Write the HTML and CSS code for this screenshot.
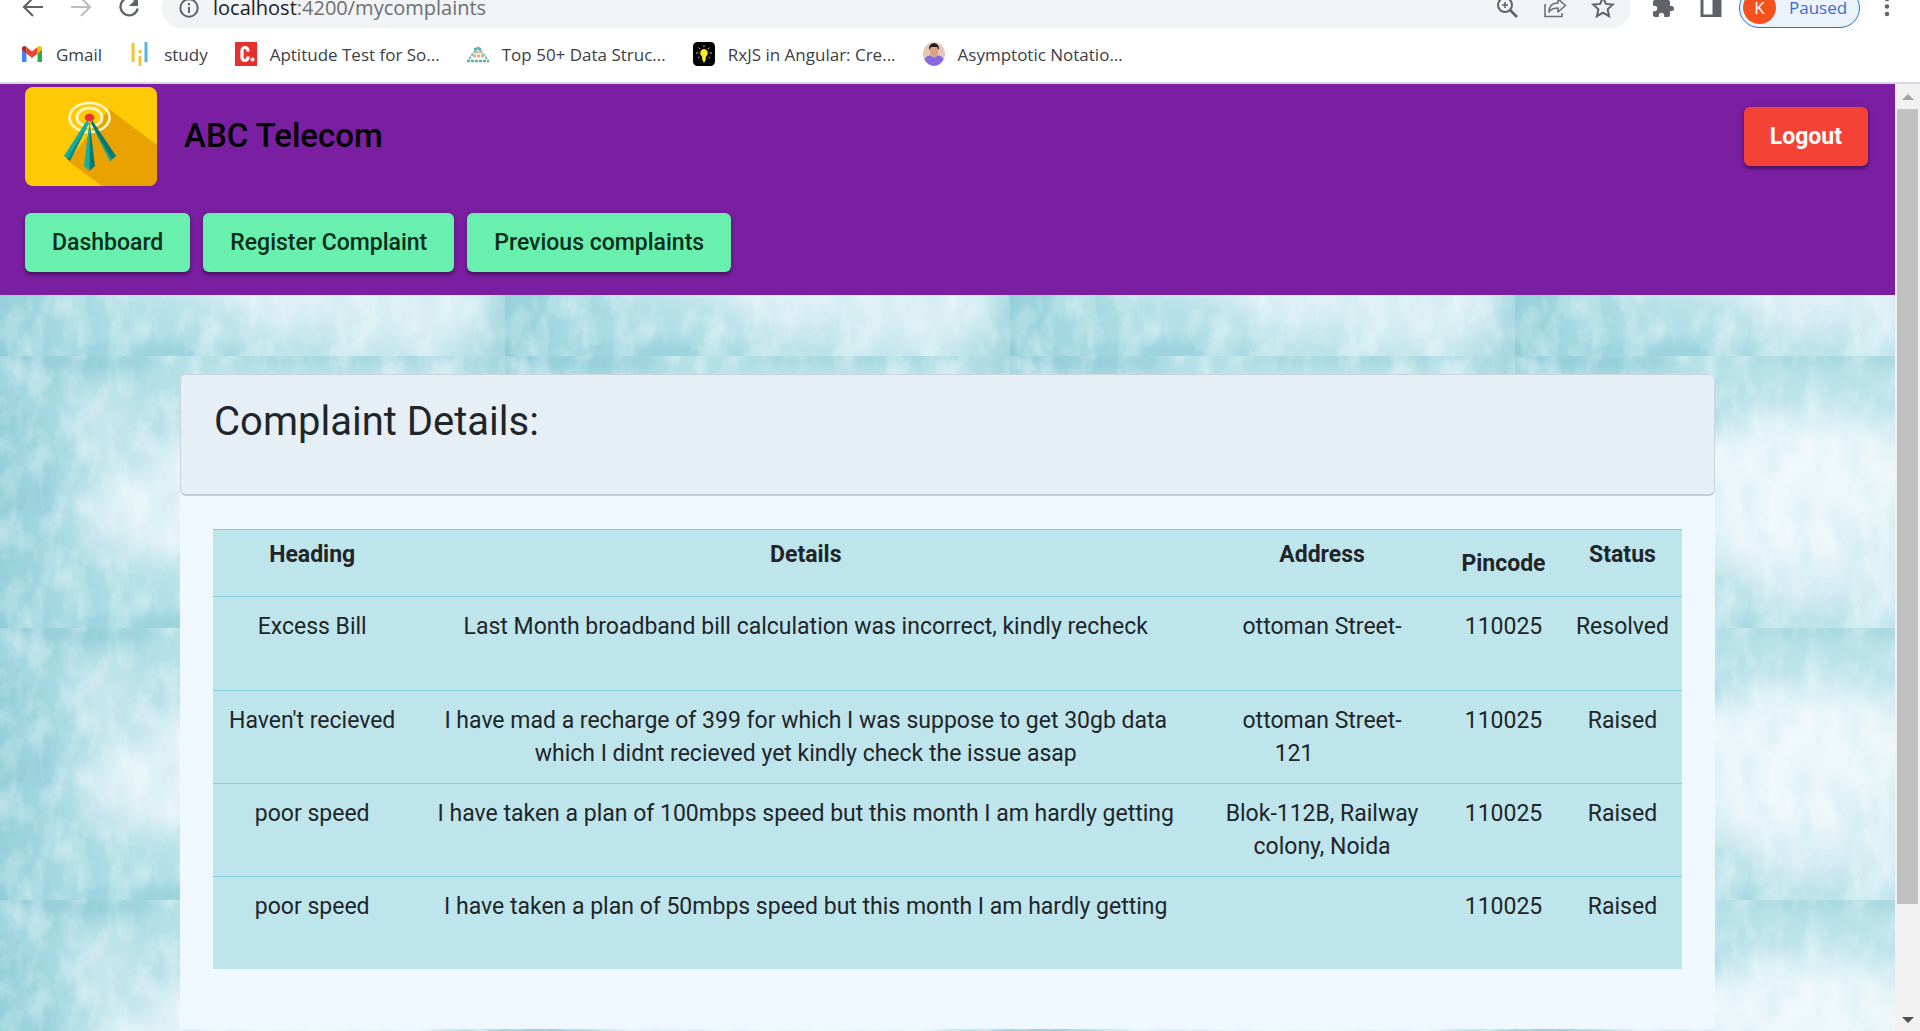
FILE: index.html
```html
<!DOCTYPE html>
<html lang="en">
<head>
<meta charset="utf-8">
<title>My complaints</title>
<link rel="stylesheet" href="styles.css">
</head>
<body>
<div class="browser">
  <header class="chrome">
    <div class="toolbar">
      <div class="nav">
        <button class="icon-btn" aria-label="Back"><svg width="24" height="24" viewBox="0 0 24 24"><path d="M22 12H3M12 3l-9 9 9 9" fill="none" stroke="#5f6368" stroke-width="2.2"/></svg></button>
        <button class="icon-btn" aria-label="Forward"><svg width="24" height="24" viewBox="0 0 24 24"><path d="M2 12h19M12 3l9 9-9 9" fill="none" stroke="#bdbfc2" stroke-width="2.2"/></svg></button>
        <button class="icon-btn" aria-label="Reload"><svg width="24" height="24" viewBox="0 0 24 24"><path d="M19 6.200A8.700 8.700 0 1 0 20.700 13.500" fill="none" stroke="#5f6368" stroke-width="2.300"/><path d="M21 2v9h-9z" fill="#5f6368"/></svg></button>
      </div>
      <div class="omnibox">
        <svg width="22" height="22" viewBox="0 0 22 22"><circle cx="11" cy="11" r="8.700" fill="none" stroke="#5f6368" stroke-width="2"/><path d="M11 10v6M11 6v2.200" stroke="#5f6368" stroke-width="2"/></svg>
        <p class="url">localhost<span class="url-path">:4200/mycomplaints</span></p>
        <div class="omni-actions">
          <button class="icon-btn" aria-label="Zoom"><svg width="24" height="24" viewBox="0 0 24 24"><circle cx="10" cy="10" r="7" fill="none" stroke="#5f6368" stroke-width="2"/><path d="M15 15l7 7" stroke="#5f6368" stroke-width="2.600"/><path d="M10 7v6M7 10h6" stroke="#5f6368" stroke-width="1.600"/></svg></button>
          <button class="icon-btn" aria-label="Share"><svg width="24" height="24" viewBox="0 0 24 24"><path d="M2 9v12.500h17V18" fill="none" stroke="#6c7074" stroke-width="1.600"/><path d="M6 17c0-6 3-9 9-9V4l7.500 6.500L15 17v-4c-4 0-7 1-9 4z" fill="none" stroke="#6c7074" stroke-width="1.600" stroke-linejoin="round"/></svg></button>
          <button class="icon-btn" aria-label="Bookmark"><svg width="24" height="24" viewBox="0 0 24 24"><path d="M12 2.500l2.900 6.400 6.800.7-5.100 4.700 1.500 6.900-6.100-3.600-6.100 3.600 1.500-6.900L2.300 9.600l6.800-.7z" fill="none" stroke="#5f6368" stroke-width="2"/></svg></button>
        </div>
      </div>
      <div class="tools">
        <button class="icon-btn" aria-label="Extensions"><svg width="24" height="24" viewBox="0 0 24 24"><path d="M20.500 11H19V7a2 2 0 0 0-2-2h-4V3.500a2.500 2.500 0 0 0-5 0V5H4a2 2 0 0 0-2 2v3.800h1.500a2.700 2.700 0 0 1 0 5.400H2V20c0 1.100.9 2 2 2h3.800v-1.500a2.700 2.700 0 0 1 5.400 0V22H17a2 2 0 0 0 2-2v-4h1.500a2.500 2.500 0 0 0 0-5z" fill="#5f6368"/></svg></button>
        <button class="icon-btn" aria-label="Side panel"><svg width="24" height="24" viewBox="0 0 24 24"><path d="M1.500 2h21v20h-21z" fill="#5f6368"/><path d="M4.500 5h9v14.500h-9z" fill="#fff"/></svg></button>
        <button class="profile"><span class="avatar">K</span>Paused</button>
        <button class="icon-btn narrow" aria-label="Menu"><svg width="6" height="24" viewBox="0 0 6 24"><g fill="#5f6368"><circle cx="3" cy="4" r="2.200"/><circle cx="3" cy="11.500" r="2.200"/><circle cx="3" cy="19" r="2.200"/></g></svg></button>
      </div>
    </div>
    <nav class="bookmarks">
      <a href="#"><svg width="24" height="24" viewBox="0 0 24 24"><path d="M2 6v14h4.500v-9z" fill="#4285f4"/><path d="M22 6v14h-4.500v-9z" fill="#34a853"/><path d="M6.500 5l5.500 4.500L17.500 5v6.500L12 16l-5.500-4.500z" fill="#ea4335"/><path d="M2 6.500C2 4 4.500 3.300 6.500 5v6.500L2 8z" fill="#c5221f"/><path d="M22 6.500C22 4 19.500 3.300 17.500 5v6.500L22 8z" fill="#fbbc04"/></svg>Gmail</a>
      <a href="#"><svg width="24" height="24" viewBox="0 0 24 24"><path d="M5 1v19M12 14v10M12 8v3" stroke="#fbc02d" stroke-width="3"/><path d="M18 0v20" stroke="#55b4e6" stroke-width="3"/></svg>study</a>
      <a href="#"><svg width="24" height="24" viewBox="0 0 24 24"><path d="M1 0h22v24H1z" fill="#e53030"/><path d="M14 9.500V8.500a3 3 0 0 0-6 0v7a3 3 0 0 0 6 0v-1" fill="none" stroke="#fff" stroke-width="3.200"/><circle cx="18.500" cy="17.500" r="2" fill="#fff"/></svg>Aptitude Test for So...</a>
      <a href="#"><svg width="24" height="24" viewBox="0 0 24 24"><path d="M12 5l-9 12M12 5l9 12" stroke="#74c3bd" stroke-width="2" stroke-dasharray="3 1"/><path d="M9 10h7M7 14h11" stroke="#e7b46c" stroke-width="3" stroke-dasharray="3 1"/><path d="M1 19h22M8 7h8" stroke="#54b2ad" stroke-width="2.500" stroke-dasharray="3 1"/></svg>Top 50+ Data Struc...</a>
      <a href="#"><svg width="24" height="24" viewBox="0 0 24 24"><rect x="1" width="22" height="24" rx="4.500"/><path d="M12 7a4 4 0 0 1 2.500 7c-.7.800-.7 1.500-.7 3.500L12 21l-1.800-3.500c0-2 0-2.700-.7-3.500A4 4 0 0 1 12 7z" fill="#f9ee21"/><path d="M12 3v2M6.500 5.500L8 7M17.500 5.500L16 7M4 11h2.500M17.500 11H20M6 16l1.500-1M18 16l-1.500-1" stroke="#d8c92a"/></svg>RxJS in Angular: Cre...</a>
      <a href="#"><svg width="24" height="24" viewBox="0 0 24 24"><ellipse cx="12" cy="12" rx="11" ry="12" fill="#e4c8b9"/><path d="M2.500 17c2-4 6-4 9.500-3 4-1 7.500-1 9.500 3-4 9-15 9-19 0z" fill="#8666e4"/><path d="M8 5h8v6c0 6-8 6-8 0z" fill="#d7a184"/><path d="M7 8c-1-9 11-9 10 0l-2-3H9z" fill="#231c22"/></svg>Asymptotic Notatio...</a>
    </nav>
  </header>
  <div class="viewport">
    <div class="page">
      <svg class="backdrop" width="100%" height="100%" aria-hidden="true">
        <defs>
          <filter id="soft" x="-50%" y="-50%" width="200%" height="200%"><feGaussianBlur stdDeviation="17"/></filter>
          <filter id="soft-small" x="-50%" y="-100%" width="200%" height="300%"><feGaussianBlur stdDeviation="8"/></filter>
          <filter id="grain" x="0" y="0" width="100%" height="100%">
            <feTurbulence type="fractalNoise" baseFrequency="0.045 0.025" numOctaves="4" seed="8"/>
            <feColorMatrix values="0 0 0 0 .95  0 0 0 0 .99  0 0 0 0 1  2.400 0 0 0 -.95"/>
          </filter>
          <filter id="shade" x="0" y="0" width="100%" height="100%">
            <feTurbulence type="fractalNoise" baseFrequency="0.040 0.020" numOctaves="4" seed="21"/>
            <feColorMatrix values="0 0 0 0 .48  0 0 0 0 .76  0 0 0 0 .82  2.400 0 0 0 -.95"/>
          </filter>
          <linearGradient id="base"><stop offset="0" stop-color="#8eccd6"/><stop offset=".12" stop-color="#a3d8e0"/><stop offset=".35" stop-color="#b4e0e6"/><stop offset=".9" stop-color="#bde3e9"/><stop offset="1" stop-color="#a2d5dd"/></linearGradient>
          <pattern id="tile" width="505" height="272" patternUnits="userSpaceOnUse">
            <rect width="505" height="272" fill="url(#base)"/>
            <g filter="url(#soft)">
              <ellipse cx="290" cy="140" rx="155" ry="82" fill="#edf7fc"/>
              <ellipse cx="290" cy="205" rx="55" ry="42" fill="#e6f3f9"/>
              <ellipse cx="410" cy="205" rx="80" ry="62" fill="#dbeff4"/>
              <ellipse cx="105" cy="65" rx="38" ry="26" fill="#cfe9ef"/>
              <ellipse cx="150" cy="155" rx="70" ry="48" fill="#e2f2f7"/>
              <ellipse cx="48" cy="138" rx="14" ry="26" fill="#8fc9da"/>
            </g>
            <g filter="url(#soft-small)">
              <ellipse cx="150" cy="268" rx="95" ry="10" fill="#94d0dc"/>
              <ellipse cx="90" cy="5" rx="70" ry="9" fill="#8fcbd7"/>
              <ellipse cx="360" cy="0" rx="150" ry="8" fill="#9fd3dc"/>
              <ellipse cx="180" cy="62" rx="36" ry="11" fill="#aedce3"/>
            </g>
            <rect width="505" height="272" filter="url(#grain)" opacity=".45"/>
            <rect width="505" height="272" filter="url(#shade)" opacity=".3"/>
          </pattern>
        </defs>
        <rect width="100%" height="100%" fill="url(#tile)"/>
      </svg>
      <header class="site-header">
        <div class="brand-row">
          <svg class="logo" width="132" height="99" viewBox="0 0 132 99" role="img" aria-label="ABC Telecom logo"><path d="M0 0h132v99H0z" fill="#ffca05"/><path d="M84 22l48 36v41H77L43 74z" fill="#e9a300"/><g fill="none" stroke="#fff5c4"><ellipse cx="64.500" cy="30.500" rx="20" ry="14.500" stroke-width="2.600"/><ellipse cx="64.500" cy="30.500" rx="12.500" ry="9.500" stroke-width="2.800"/></g><path d="M62 33L39 69l6 5 19-38z" fill="#16aea1"/><path d="M64 36L45 74l-3-2z" fill="#0e877d"/><path d="M67 33l24 36-6 5-19-38z" fill="#08776f"/><path d="M66 36l19 38 2-1z" fill="#17a69a"/><path d="M64.500 34L59 79l5.500 5z" fill="#16aea1"/><path d="M64.500 34L70 79l-5.500 5z" fill="#08776f"/><ellipse cx="64.500" cy="30.500" rx="4.800" ry="3.800" fill="#ee2f2f"/></svg>
          <h1 class="brand">ABC Telecom</h1>
          <button class="btn btn-logout">Logout</button>
        </div>
        <nav class="menu">
          <button class="btn">Dashboard</button>
          <button class="btn">Register Complaint</button>
          <button class="btn">Previous complaints</button>
        </nav>
      </header>
      <main class="content">
        <section class="card">
          <div class="card-header"><h2>Complaint Details:</h2></div>
          <div class="card-body">
            <table class="complaints">
              <colgroup><col class="c-heading"><col class="c-details"><col class="c-address"><col class="c-pin"><col class="c-status"></colgroup>
              <thead>
                <tr><th>Heading</th><th>Details</th><th>Address</th><th class="mid">Pincode</th><th>Status</th></tr>
              </thead>
              <tbody>
                <tr><td>Excess Bill</td><td>Last Month broadband bill calculation was incorrect, kindly recheck</td><td>ottoman Street-</td><td>110025</td><td>Resolved</td></tr>
                <tr><td>Haven't recieved</td><td>I have mad a recharge of 399 for which I was suppose to get 30gb data which I didnt recieved yet kindly check the issue asap</td><td>ottoman Street-<span class="house-no">121</span></td><td>110025</td><td>Raised</td></tr>
                <tr><td>poor speed</td><td>I have taken a plan of 100mbps speed but this month I am hardly getting</td><td>Blok-112B, Railway colony, Noida</td><td>110025</td><td>Raised</td></tr>
                <tr><td>poor speed</td><td>I have taken a plan of 50mbps speed but this month I am hardly getting</td><td></td><td>110025</td><td>Raised</td></tr>
              </tbody>
            </table>
          </div>
        </section>
      </main>
    </div>
    <div class="scrollbar" aria-hidden="true">
      <span class="arrow up"></span>
      <span class="thumb"></span>
      <span class="arrow down"></span>
    </div>
  </div>
</div>
</body>
</html>
```
FILE: styles.css
```css
* { box-sizing: border-box; }

body {
  margin: 0;
  font-family: Roboto, "Liberation Sans", sans-serif;
  color: #212529;
  overflow: hidden;
}

button {
  border: 0;
  font-family: inherit;
  cursor: pointer;
}

.browser {
  display: flex;
  flex-direction: column;
  height: 100vh;
}

/* browser chrome */
.chrome {
  flex: none;
  background: #fff;
  border-bottom: 2px solid #dcd3e2;
  font-family: "Open Sans", "Noto Sans", sans-serif;
}

.toolbar {
  display: flex;
  align-items: center;
  height: 40px;
  margin-top: -12px;
}

.icon-btn {
  display: grid;
  place-items: center;
  width: 48px;
  height: 40px;
  padding: 0 0 2px;
  background: none;
}

.icon-btn.narrow { width: 24px; }

.nav { display: flex; padding: 0 9px; }

.omnibox {
  flex: 1;
  display: flex;
  align-items: center;
  gap: 13px;
  height: 40px;
  padding: 0 4px 0 16px;
  border-radius: 20px;
  background: #f1f3f4;
}

.url {
  margin: 0;
  flex: 1;
  font-size: 20px;
  line-height: 16px;
  color: #202124;
}

.url-path { color: #6b6f73; }

.omni-actions { display: flex; }

.tools {
  display: flex;
  align-items: center;
  padding: 0 21px 0 8px;
}

.profile {
  display: flex;
  align-items: center;
  gap: 13px;
  width: 121px;
  height: 40px;
  margin: 0 15px 0 4px;
  padding: 0 3px 2px;
  border: 1px solid #2f6fc9;
  border-radius: 20px;
  background: #eaf2fc;
  color: #3b6cc9;
  font-size: 17px;
}

.avatar {
  display: grid;
  place-items: center;
  width: 33px;
  height: 33px;
  border-radius: 50%;
  background: #f4511e;
  color: #fff;
}

.bookmarks {
  display: flex;
  align-items: center;
  gap: 26px;
  height: 54px;
  padding: 0 20px 2px;
}

.bookmarks a {
  display: flex;
  align-items: center;
  gap: 12px;
  color: #3c4043;
  font-size: 17px;
  text-decoration: none;
  white-space: nowrap;
}

/* page area */
.viewport {
  flex: 1;
  display: flex;
  min-height: 0;
}

.page {
  position: relative;
  z-index: 0;
  flex: 1;
  overflow: hidden;
  background: #b9e0e6;
}

.backdrop {
  position: absolute;
  inset: 0;
  z-index: -1;
}

.site-header {
  padding: 3px 27px 23px 25px;
  background: #7b1fa2;
}

.brand-row {
  display: flex;
  align-items: center;
  gap: 27px;
}

.logo { border-radius: 8px; }

.brand {
  margin: 0;
  padding-bottom: 2px;
  flex: 1;
  color: #000;
  font-size: 33px;
  font-weight: 500;
  line-height: 40px;
}

.menu {
  display: flex;
  gap: 13px;
  margin-top: 27px;
}

.btn {
  height: 59px;
  padding: 0 27px;
  border-radius: 6px;
  background: #69f0ae;
  color: #0c2e1c;
  font-size: 23px;
  font-weight: 500;
  box-shadow: 0 3px 3px rgba(0, 0, 0, .3), 0 1px 6px rgba(0, 0, 0, .2);
}

.btn-logout {
  padding: 0 26px;
  background: #f44336;
  color: #fff;
  font-weight: 700;
}

.content { padding-top: 79px; }

.card {
  width: 81%;
  margin: 0 auto;
  border-radius: 6px 6px 0 0;
  background: #f0f8ff;
}

.card-header {
  height: 122px;
  padding: 23px 33px;
  border: 1px solid #cdd5dc;
  border-bottom: 2px solid #c5ccd4;
  border-radius: 6px;
  background: #e7eff6;
}

.card-header h2 {
  margin: 0;
  font-size: 40px;
  font-weight: 400;
  line-height: 48px;
}

.card-body { padding: 33px 33px 60px; }

.complaints {
  width: 100%;
  table-layout: fixed;
  border-collapse: separate;
  border-spacing: 0;
  background: #bee5eb;
  font-size: 23px;
  line-height: 33px;
  text-align: center;
}

.complaints th,
.complaints td {
  height: 93px;
  padding: 13px;
  border-top: 1px solid #86cfda;
  vertical-align: top;
}

.complaints tbody tr:first-child td { height: 94px; }

.complaints th {
  height: 67px;
  padding: 8px 13px;
  font-weight: 700;
}

.complaints .mid { vertical-align: middle; }

.complaints td:last-child { padding: 13px 4px; }

.c-heading { width: 13.5%; }
.c-details { width: 53.7%; }
.c-address { width: 16.6%; }
.c-pin { width: 8.1%; }
.c-status { width: 8.1%; }

.house-no {
  display: block;
  padding-right: 56px;
}

/* scrollbar */
.scrollbar {
  display: flex;
  flex-direction: column;
  align-items: center;
  width: 25px;
  background: #f1f1f1;
}

.thumb {
  width: 21px;
  height: 84%;
  background: #c1c1c1;
}

.arrow {
  width: 12px;
  border: 6px solid transparent;
}

.arrow.up {
  margin: 4px 0 9px;
  border-bottom-color: #a3a3a3;
}

.arrow.down {
  margin: auto 0 2px;
  border-top-color: #505050;
}
```
